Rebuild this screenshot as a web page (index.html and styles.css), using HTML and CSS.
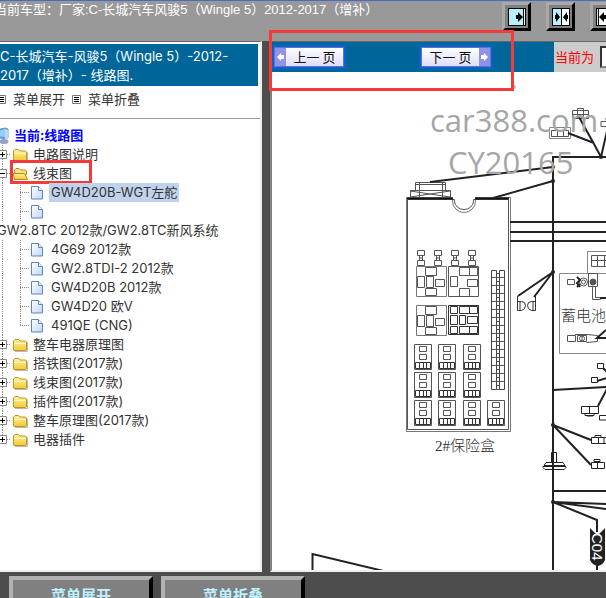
FILE: index.html
```
<!DOCTYPE html>
<html lang="zh-CN">
<head>
<meta charset="utf-8">
<title>线路图</title>
<link rel="stylesheet" href="styles.css">
</head>
<body>
<svg class="defs" aria-hidden="true">
  <defs>
    <linearGradient id="gold" x1="0" y1="0" x2="0" y2="1"><stop offset="0" stop-color="#fff2a0"/><stop offset="1" stop-color="#f3c932"/></linearGradient>
    <linearGradient id="sheet" x1="0" y1="0" x2="1" y2="1"><stop offset="0" stop-color="#fff"/><stop offset="1" stop-color="#bcd8fa"/></linearGradient>
    <symbol id="folder" viewBox="0 0 18 18">
      <path d="M4 15.500h12.500v-9" fill="none" stroke="#b9b9b9"/>
      <path d="M2.500 14V5l1.500-1.500h3.500L9 5h5.500l1 1v8l-1 .5H3z" fill="url(#gold)" stroke="#c39323"/>
      <path d="M3 7.500h12" stroke="#fff7c4"/>
    </symbol>
    <symbol id="folder-open" viewBox="0 0 18 18">
      <path d="M3.500 14.500V5L5 3.500h3L9.500 5h5l1 1v4" fill="#fae27a" stroke="#b98b20"/>
      <path d="M3.500 14.500L2 8.500h11.500l3 6z" fill="url(#gold)" stroke="#b98b20"/>
    </symbol>
    <symbol id="page" viewBox="0 0 18 18">
      <path d="M2.500 2.500h7l4 4v8.500h-11z" fill="url(#sheet)" stroke="#6384b9"/>
      <path d="M9.500 2.500v4h4" fill="#eaf3ff" stroke="#6384b9"/>
    </symbol>
    <symbol id="plus" viewBox="0 0 18 19">
      <path d="M9.500 0v19M14 9.500h4" stroke="#888" stroke-dasharray="1 1"/>
      <path d="M5.500 5.500h8v8h-8z" fill="#fff" stroke="#888"/>
      <path d="M7 9.500h5M9.500 7v5" stroke="#000"/>
    </symbol>
    <symbol id="minus" viewBox="0 0 18 19">
      <path d="M9.500 0v19M14 9.500h4" stroke="#888" stroke-dasharray="1 1"/>
      <path d="M5.500 5.500h8v8h-8z" fill="#fff" stroke="#888"/>
      <path d="M7 9.500h5" stroke="#000"/>
    </symbol>
    <symbol id="plus-end" viewBox="0 0 18 19">
      <path d="M9.500 0v9M14 9.500h4" stroke="#888" stroke-dasharray="1 1"/>
      <path d="M5.500 5.500h8v8h-8z" fill="#fff" stroke="#888"/>
      <path d="M7 9.500h5M9.500 7v5" stroke="#000"/>
    </symbol>
    <symbol id="line" viewBox="0 0 18 19"><path d="M9.500 0v19" stroke="#888" stroke-dasharray="1 1"/></symbol>
    <symbol id="join" viewBox="0 0 18 19"><path d="M9.500 0v19M9 9.500h9" stroke="#888" stroke-dasharray="1 1"/></symbol>
    <symbol id="join-end" viewBox="0 0 18 19"><path d="M9.500 0v9M9 9.500h9" stroke="#888" stroke-dasharray="1 1"/></symbol>
    <symbol id="list" viewBox="0 0 9 9"><path d="M.5.5h8v8h-8z" fill="#fff" stroke="#777"/><path d="M2 2.500h5M2 4.500h5M2 6.500h5" stroke="#000"/></symbol>
  </defs>
</svg>

<header class="topbar">
  <p class="model">当前车型：厂家:C-长城汽车风骏5（Wingle 5）2012-2017（增补）</p>
  <div class="layout-buttons">
    <button type="button" aria-label="展开左侧"><svg width="18" height="18"><path d="M0 0h18v18H0z"/><path d="M1 1h14v16H1z" fill="#b8f0ff"/><path d="M16 1h1v16h-1z" fill="#fff"/><path d="M8 7h2V4l5 5-5 5v-3H8z"/></svg></button>
    <button type="button" aria-label="平分"><svg width="18" height="18"><path d="M0 0h18v18H0z"/><path d="M1 1h8v16H1z" fill="#b8f0ff"/><path d="M10 1h7v16h-7z" fill="#fff"/><path d="M3 7h1V4l4 5-4 5v-3H3zM16 7h-1V4l-4 5 4 5v-3h1z"/></svg></button>
    <button type="button" aria-label="展开右侧"><svg width="18" height="18"><path d="M0 0h18v18H0z"/><path d="M1 1h1v16H1z" fill="#b8f0ff"/><path d="M3 1h14v16H3z" fill="#fff"/><path d="M10 7H8V4L3 9l5 5v-3h2z"/></svg></button>
  </div>
</header>

<main class="frames">
  <nav class="sidebar">
    <h1 class="title">C-长城汽车-风骏5（Wingle 5）-2012-2017（增补）- 线路图.</h1>
    <div class="fold">
      <svg width="9" height="9"><use href="#list"/></svg><a href="#open">菜单展开</a>
      <svg width="9" height="9"><use href="#list"/></svg><a href="#close">菜单折叠</a>
    </div>
    <ul class="tree">
      <li class="root"><svg width="18" height="18"><path d="M3 3l9-2 3 1v9l-3 1-9-2z" fill="#4ea3e8" stroke="#7f93b8"/><path d="M5 4l7-2v8l-7-1z" fill="#8fd3fb"/><path d="M12 2l3 1v9l-3 1z" fill="#c9d3e6"/><ellipse cx="11" cy="14.500" rx="4.500" ry="2.500" fill="#9a9fc4"/></svg><span>当前:线路图</span></li>
      <li><svg class="rail"><use href="#plus"/></svg><svg class="ico"><use href="#folder"/></svg><a href="#n1">电路图说明</a></li>
      <li class="marked"><svg class="rail"><use href="#minus"/></svg><svg class="ico"><use href="#folder-open"/></svg><a href="#n2">线束图</a></li>
      <li><svg class="rail"><use href="#line"/></svg><svg class="rail"><use href="#join"/></svg><svg class="ico"><use href="#page"/></svg><a class="current" href="#n3">GW4D20B-WGT左舵</a></li>
      <li class="wrapped"><svg class="rail"><use href="#line"/></svg><svg class="rail"><use href="#join"/></svg><svg class="ico"><use href="#page"/></svg><a href="#n4">GW2.8TC 2012款/GW2.8TC新风系统</a></li>
      <li><svg class="rail"><use href="#line"/></svg><svg class="rail"><use href="#join"/></svg><svg class="ico"><use href="#page"/></svg><a href="#n5">4G69 2012款</a></li>
      <li><svg class="rail"><use href="#line"/></svg><svg class="rail"><use href="#join"/></svg><svg class="ico"><use href="#page"/></svg><a href="#n6">GW2.8TDI-2 2012款</a></li>
      <li><svg class="rail"><use href="#line"/></svg><svg class="rail"><use href="#join"/></svg><svg class="ico"><use href="#page"/></svg><a href="#n7">GW4D20B 2012款</a></li>
      <li><svg class="rail"><use href="#line"/></svg><svg class="rail"><use href="#join"/></svg><svg class="ico"><use href="#page"/></svg><a href="#n8">GW4D20 欧V</a></li>
      <li><svg class="rail"><use href="#line"/></svg><svg class="rail"><use href="#join-end"/></svg><svg class="ico"><use href="#page"/></svg><a href="#n9">491QE (CNG)</a></li>
      <li><svg class="rail"><use href="#plus"/></svg><svg class="ico"><use href="#folder"/></svg><a href="#n10">整车电器原理图</a></li>
      <li><svg class="rail"><use href="#plus"/></svg><svg class="ico"><use href="#folder"/></svg><a href="#n11">搭铁图(2017款)</a></li>
      <li><svg class="rail"><use href="#plus"/></svg><svg class="ico"><use href="#folder"/></svg><a href="#n12">线束图(2017款)</a></li>
      <li><svg class="rail"><use href="#plus"/></svg><svg class="ico"><use href="#folder"/></svg><a href="#n13">插件图(2017款)</a></li>
      <li><svg class="rail"><use href="#plus"/></svg><svg class="ico"><use href="#folder"/></svg><a href="#n14">整车原理图(2017款)</a></li>
      <li><svg class="rail"><use href="#plus-end"/></svg><svg class="ico"><use href="#folder"/></svg><a href="#n15">电器插件</a></li>
    </ul>
  </nav>

  <section class="viewer">
    <div class="toolbar">
      <div class="pager">
        <button type="button" class="prev"><svg width="11" height="18"><path d="M0 0h11v18H0z" fill="#8f93e6"/><path d="M2 9l4-4v2h3v4H6v2z" fill="#fff"/></svg><span>上一 页</span></button>
        <button type="button" class="next"><span>下一 页</span><svg width="11" height="18"><path d="M0 0h11v18H0z" fill="#8f93e6"/><path d="M9 9L5 5v2H2v4h3v2z" fill="#fff"/></svg></button>
      </div>
      <div class="quality">
        <label for="quality">当前为</label>
        <select id="quality"><option>高清图</option></select>
      </div>
    </div>
    <svg class="diagram" width="334" height="498" viewBox="272 72 334 498">
      <defs>
        <g id="fuse"><path d="M0 0h7v5H0zM0 10h7v5H0zM2 5v5M5 5v5M1.500 7.500h4"/></g>
        <g id="relay"><path d="M0 0h17v25H0z"/><path d="M5 2h7v5H5zM5 10h7v5H5z"/><path d="M1 18h15v6H1zM5 18v6M9 18v6M12 18v6" stroke="#333"/></g>
        <g id="block"><path d="M0 0h30v30H0z" stroke="#777"/><path d="M9 1h11v8H9zM1 10h7v11H1zM10 10h7v11h-7zM19 13h9v7h-9zM9 22h11v7H9z"/></g>
      </defs>
      <g class="thin">
        <path d="M549.500 127.500h21v11h-21z" stroke="#888"/>
        <path d="M551.500 130.500h17v6h-17zM557.500 130v7M563.500 130v7M572.500 110.500h16v8h-16zM572 114.500h16M577.500 108.500h6v10h-6zM606 121.500h-5v5h5M605 119h2"/>
        <path d="M415.500 182.500h30v8h-30zM415 184.500h30M419.500 183v14M442.500 183v14M410.500 190.500h40v7h-40zM410 191l40 6M410 197l40-6"/>
        <path d="M406.500 197.500H452.500V201a11.500 11.500 0 0 0 23 0v-3.500H510.500V431.500H406.500z" stroke="#777"/>
        <path d="M407.500 199.500H454.500V201a9.500 8.500 0 0 0 19 0v-1.500H508.500V429.500H407.500z"/>
        <path d="M407 198.500h46M475 198.500h34" stroke="#111" stroke-width="2"/>
        <use href="#fuse" x="417.500" y="250.500"/><use href="#fuse" x="434.500" y="250.500"/><use href="#fuse" x="451.500" y="250.500"/><use href="#fuse" x="468.500" y="250.500"/>
        <use href="#block" x="416.500" y="266.500"/><use href="#block" x="416.500" y="305.500"/>
        <path d="M448.500 266.500h30v30h-30zM459.500 267.500h10v8h-10zM469.500 267.500h8v8h-8zM450.500 276.500h7v10h-7zM467.500 279.500h10v7h-10zM459.500 288.500h10v8h-10z"/>
        <path d="M448.500 305.500h30v29h-30zM450.500 306.500h7v7h-7zM459.500 306.500h10v7h-10zM469.500 306.500h8v7h-8zM450.500 315.500h7v9h-7zM459.500 315.500h6v9h-6zM467.500 316.500h10v7h-10zM450.500 326.500h7v7h-7zM459.500 326.500h10v7h-10zM469.500 326.500h8v7h-8z" stroke="#333"/>
        <path d="M491.500 270.500h5v119h-5zM499.500 270.500h5v119h-5z" stroke="#444"/>
        <path d="M494 277v112M502 277v112" stroke-width="5" stroke-dasharray="1 7"/>
        <path d="M498 273v117" stroke-width="3" stroke-dasharray="1 3"/>
        <use href="#relay" x="414.500" y="344.500"/><use href="#relay" x="438.500" y="344.500"/><use href="#relay" x="463.500" y="344.500"/>
        <use href="#relay" x="414.500" y="372.500"/><use href="#relay" x="438.500" y="372.500"/><use href="#relay" x="463.500" y="372.500"/>
        <use href="#relay" x="414.500" y="400.500"/><use href="#relay" x="438.500" y="400.500"/><use href="#relay" x="463.500" y="400.500"/><use href="#relay" x="487.500" y="400.500"/>
        <path d="M517.500 296v14.500h4q4-1 4-5t-4-4h-4M535.500 296v14.500h-4q-4-1-4-5t4-4h4M520 302v8M533 302v8" stroke="#333"/>
        <path d="M606 273.500h-46.500v80H606M606 251.500h-18.500v22" stroke="#888"/>
        <path d="M606 255.500h-14.500v11H606M591 260.500h15M597.500 255v11M604.500 255v11M567.500 279.500h7v5h-7zM588.500 273.500h9v13h-9zM592.500 287v12.500h8v-2h-5V287"/>
        <circle cx="583.500" cy="282" r="4"/><circle cx="583.500" cy="282" r="2"/><circle cx="593" cy="282" r="3" fill="#555"/>
        <path d="M577 277l3 3-3 3 3 4M577 287l3-3" stroke="#222" stroke-width="2"/>
        <path d="M567.500 335.500h8v6h-8zM577.500 335.500h9v6h-9zM586.500 334.500l11 1v6l-11 1M575 334.500h12"/><circle cx="582" cy="338.500" r="2.500"/><path d="M582 336v5"/>
        <path d="M597.500 363.500h6v5h-6zM591.500 377.500h6v5h-6zM581.500 406.500h17v7h-17zM589.500 406v7M585 413.500h9v2h-9zM587 416h6M606 415.500h-6.500v4.500h6.500M591.500 437.500h15v6h-15zM598.500 437v6M604 437v6M595 435.500h6v2h-6zM591.500 462.500h13v6h-13zM597.500 462v6M594 459.500h6v2h-6z" stroke="#222"/>
        <path d="M551.500 452.500h5v10h-5zM546 462.500h17l2 3h-21zM543 466.500h23v1l-2 2h-19l-2-2z" stroke="#222"/>
      </g>
      <g class="wire">
        <path d="M553 570V157h53M579 117l15 27 7 13M568 133l26 10M607 131l-6 26M430 182l123-15M493 198l60-17"/>
        <path d="M510 222h96M510 232h96M510 241h96M553 272l-35 24M553 272l-19 25M600 298h6M606 330l-9 8h9M603 368l4 4M597 381l10-3M553 390l53-3M607 389l-9 17M553 425l38 15M553 425l38 40M553 491h53M553 502l53 2M553 502l53 7M553 502l44 18v12M597 565v5M312.500 570v-16l71 17"/>
      </g>
      <path d="M590 528l6 6h3l6-6v32q-2 5-7 6-6-1-8-6z" fill="#222"/>
      <g fill="#222"><circle cx="601" cy="157" r="2"/><circle cx="553" cy="167" r="2"/><circle cx="553" cy="181" r="2"/><circle cx="553" cy="272" r="2"/><circle cx="553" cy="425" r="2"/><circle cx="553" cy="502" r="2"/></g>
      <circle cx="514" cy="87" r="2" fill="#b9c0c8"/>
      <text class="plug" x="533" y="-592" transform="rotate(90)">C04</text>
      <text class="part" x="435" y="451">2#保险盒</text>
      <text class="part" x="561" y="321">蓄电池</text>
      <text class="mark" x="430" y="132">car388.com</text>
      <text class="mark" x="448" y="174">CY20165</text>
    </svg>
    <div class="highlight"></div>
  </section>
</main>

<footer class="bottombar">
  <button type="button">菜单展开</button>
  <button type="button">菜单折叠</button>
</footer>
</body>
</html>
```
FILE: styles.css
```
*, *::after { box-sizing: border-box; }

body {
  margin: 0;
  height: 100vh;
  display: flex;
  flex-direction: column;
  overflow: hidden;
  background: #4d4d4d;
  color: #333;
  font: 13px/19px Inter, "Noto Sans CJK SC", sans-serif;
}

a { color: inherit; text-decoration: none; }
button { padding: 0; }

.defs { position: absolute; width: 0; height: 0; }

/* Top bar */
.topbar {
  flex: none;
  display: flex;
  justify-content: space-between;
  height: 41px;
  border-top: 1px solid #4a6cc0;
  background: #999;
  overflow: hidden;
}
.model {
  margin: 0 0 0 -6px;
  color: #fff;
  font: 13px/17px "Liberation Sans", "Noto Sans CJK SC", sans-serif;
  white-space: nowrap;
}
.layout-buttons {
  display: flex;
  gap: 15px;
  margin-right: -13px;
  padding-top: 1px;
}
.layout-buttons button {
  display: grid;
  place-items: center;
  width: 29px;
  height: 29px;
  border: 3px solid;
  border-color: #aaa #000 #000 #aaa;
  background: #808080;
}

/* Frames */
.frames {
  flex: 1;
  min-height: 0;
  display: grid;
  grid-template-columns: 262px 1fr;
  gap: 8px;
}
.sidebar {
  overflow: hidden;
  border-top: 1px solid #666;
  border-right: 2px solid #eee;
  border-bottom: 2px solid #eee;
  background: #fff;
}
.title {
  margin: 2px 2px 0 0;
  padding: 3px 20px 1px 0;
  background: #069;
  color: #fff;
  font-size: 13px;
  font-weight: 400;
  line-height: 19px;
}
.fold {
  display: flex;
  align-items: center;
  gap: 7px;
  margin-left: -3px;
  height: 33px;
  padding-bottom: 5px;
  border-bottom: 1px solid #999;
}
.tree {
  margin: 7px 0 0 -7px;
  padding: 0;
  list-style: none;
}
.tree li {
  position: relative;
  display: flex;
  align-items: center;
  height: 19px;
  white-space: nowrap;
}
.rail { width: 18px; height: 19px; flex: none; }
.ico { width: 18px; height: 18px; flex: none; }
.tree a { margin-left: 2px; padding: 0 2px; }
.tree .current { background: #c0d2ec; }
.tree .root { color: #00f; font-weight: 700; gap: 3px; }
.tree .wrapped { height: 38px; flex-wrap: wrap; }
.marked::after {
  content: "";
  position: absolute;
  left: 17px;
  top: -4px;
  width: 82px;
  height: 24px;
  border: 3px solid #f43a3a;
}

/* Viewer */
.viewer {
  position: relative;
  min-width: 0;
  border-top: 1px solid #666;
  border-left: 2px solid #808080;
  border-bottom: 2px solid #eee;
  background: #fff;
}
.toolbar {
  display: flex;
  height: 30px;
  overflow: hidden;
  background: #069;
}
.pager {
  flex: 1;
  display: flex;
  align-items: center;
  gap: 73px;
}
.pager button {
  flex: none;
  display: flex;
  align-items: center;
  justify-content: space-between;
  width: 74px;
  height: 24px;
  border: 2px solid #06c;
  padding: 1px;
  background: linear-gradient(#fff, #dcdcfa) padding-box;
  box-shadow: inset 0 0 0 1px #6a6ed0;
  color: #111;
  font: 13px/18px "Noto Sans CJK SC", sans-serif;
}
.pager span { flex: 1; text-align: center; }
.quality {
  display: flex;
  align-items: center;
  gap: 6px;
  flex: 0 0 52px;
  min-width: 0;
  overflow: hidden;
  padding-left: 1px;
  background: #ccc;
  color: red;
  white-space: nowrap;
}
.quality select {
  flex: none;
  width: 80px;
  height: 22px;
  padding: 0;
  border: 2px inset #888;
  background: #fff;
  color: #222;
  font: 13px "Noto Sans CJK SC", sans-serif;
}
.diagram { display: block; }
.thin { fill: none; stroke: #555; stroke-width: 1; }
.wire { fill: none; stroke: #222; stroke-width: 2; }
.part { fill: #333; font: 15px "Liberation Serif", "Noto Sans CJK SC", serif; font-weight: 300; }
.plug { fill: #fff; font: 15px "Liberation Sans", sans-serif; }
.mark { fill: #a6a6a6; font: 31px "Open Sans", "Noto Sans", sans-serif; }
.highlight {
  position: absolute;
  left: -3px;
  top: -12px;
  width: 245px;
  height: 61px;
  border: 3px solid #f43a3a;
  pointer-events: none;
}

/* Bottom bar */
.bottombar {
  flex: none;
  display: flex;
  gap: 8px;
  height: 26px;
  padding: 4px 9px 0;
  overflow: hidden;
}
.bottombar button {
  flex: none;
  width: 144px;
  height: 38px;
  border: 4px solid;
  border-color: #b2b2b2 #000 #000 #b2b2b2;
  background: #808080;
  color: #bff0ff;
  font: 700 15px/20px "Noto Sans CJK SC", sans-serif;
}
```
